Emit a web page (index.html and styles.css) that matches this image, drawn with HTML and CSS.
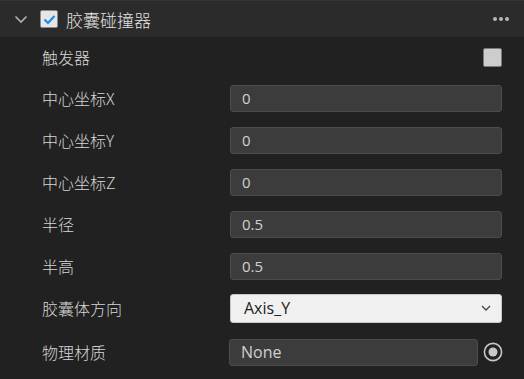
FILE: index.html
```html
<!DOCTYPE html>
<html lang="zh-CN">
<head>
    <meta charset="UTF-8">
    <title>胶囊碰撞器</title>
    <link rel="stylesheet" href="styles.css">
</head>
<body>
    <div class="panel">
        <!-- Header -->
        <div class="panel-header">
            <svg class="fold" width="14" height="10" viewBox="0 0 14 10">
                <path d="M1.5 2.5 L7 8 L12.5 2.5" fill="none" stroke="#b0b0b0" stroke-width="1.6"/>
            </svg>
            <span class="enable-box">
                <svg width="17" height="17" viewBox="0 0 17 17">
                    <path d="M3.5 8.5 L7 12 L13.5 5" fill="none" stroke="#1e8ce6" stroke-width="2.2"/>
                </svg>
            </span>
            <span class="title">胶囊碰撞器</span>
            <span class="more"><i></i><i></i><i></i></span>
        </div>

        <!-- Properties -->
        <div class="rows">
            <div class="row row-first">
                <label>触发器</label>
                <span class="toggle"></span>
            </div>
            <div class="row">
                <label>中心坐标X</label>
                <div class="field">0</div>
            </div>
            <div class="row">
                <label>中心坐标Y</label>
                <div class="field">0</div>
            </div>
            <div class="row">
                <label>中心坐标Z</label>
                <div class="field">0</div>
            </div>
            <div class="row">
                <label>半径</label>
                <div class="field">0.5</div>
            </div>
            <div class="row">
                <label>半高</label>
                <div class="field">0.5</div>
            </div>
            <div class="row">
                <label>胶囊体方向</label>
                <div class="select">
                    <span>Axis_Y</span>
                    <svg width="10" height="6" viewBox="0 0 10 6">
                        <path d="M1 1 L5 5 L9 1" fill="none" stroke="#444" stroke-width="1.3"/>
                    </svg>
                </div>
            </div>
            <div class="row row-last">
                <label>物理材质</label>
                <div class="asset">
                    <div class="field">None</div>
                    <svg class="pick" width="20" height="20" viewBox="0 0 20 20">
                        <circle cx="10" cy="10" r="8.6" fill="none" stroke="#c8c8c8" stroke-width="1.6"/>
                        <circle cx="10" cy="10" r="4.5" fill="#c8c8c8"/>
                    </svg>
                </div>
            </div>
        </div>
    </div>
</body>
</html>
```
FILE: styles.css
```css
body {
    margin: 0;
    background: #212121;
    font-family: "Noto Sans", "Noto Sans CJK SC", sans-serif;
    color: #d8d8d8;
}

.panel {
    width: 524px;
    height: 379px;
    background: #212121;
}

.panel-header {
    height: 36px;
    background: #2b2b2b;
    border-top: 1px solid #353535;
    display: flex;
    align-items: center;
}

.fold {
    margin-left: 14px;
}

.enable-box {
    width: 16px;
    height: 16px;
    margin-left: 12px;
    border: 1px solid #8a8a8a;
    border-radius: 2px;
    background: #e6e6e6;
    display: flex;
}

.enable-box svg {
    margin: -0.5px;
}

.title {
    margin-left: 8px;
    font-size: 17px;
    font-weight: 300;
    color: #e2e2e2;
    font-family: "Noto Sans CJK SC", sans-serif;
}

.more {
    margin-left: auto;
    margin-right: 15px;
    display: flex;
    gap: 2px;
}

.more i {
    width: 4px;
    height: 4px;
    border-radius: 50%;
    background: #b8b8b8;
}

.rows {
    display: flex;
    flex-direction: column;
}

.row {
    height: 42px;
    display: flex;
    align-items: center;
    padding: 0 22px 0 42px;
}

.row-first {
    height: 40px;
}

.row-last {
    height: 46px;
}

.row label {
    width: 188px;
    font-size: 16px;
    font-weight: 300;
    font-family: "Noto Sans CJK SC", sans-serif;
    color: #d6d6d6;
}

.toggle {
    margin-left: auto;
    width: 17px;
    height: 17px;
    background: #cdcdcd;
    border: 1px solid #7a7a7a;
    border-radius: 2px;
}

.field {
    flex: 1;
    height: 25px;
    background: #3c3c3c;
    border: 1px solid #4c4c4c;
    border-radius: 3px;
    padding-left: 11px;
    font-size: 15px;
    line-height: 25px;
    color: #d0d0d0;
    font-family: "Open Sans", "Noto Sans", sans-serif;
}

.select {
    flex: 1;
    height: 27px;
    background: #f0f0f0;
    border: 1px solid #c8c8c8;
    border-radius: 3px;
    display: flex;
    align-items: center;
    justify-content: space-between;
    padding: 0 10px 0 13px;
    font-size: 16px;
    color: #222;
    font-family: "Open Sans", "Noto Sans", sans-serif;
}

.asset {
    flex: 1;
    display: flex;
    align-items: center;
    margin-left: -1px;
}

.asset .field {
    font-size: 16px;
}

.pick {
    margin-left: 5px;
    margin-right: -1px;
}
```
